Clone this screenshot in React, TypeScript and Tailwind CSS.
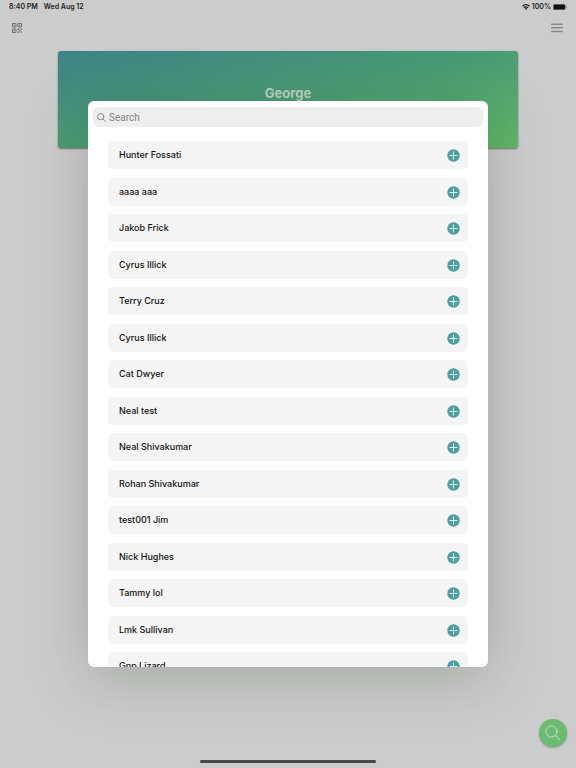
import { useState } from "react";

const people = [
  "Hunter Fossati",
  "aaaa aaa",
  "Jakob Frick",
  "Cyrus Illick",
  "Terry Cruz",
  "Cyrus Illick",
  "Cat Dwyer",
  "Neal test",
  "Neal Shivakumar",
  "Rohan Shivakumar",
  "test001 Jim",
  "Nick Hughes",
  "Tammy lol",
  "Lmk Sullivan",
  "Gnp Lizard",
];

function SearchIcon({ className }: { className: string }) {
  return (
    <svg viewBox="0 0 16 16" fill="none" stroke="currentColor" strokeLinecap="round" className={className} aria-hidden="true">
      <circle cx="6.5" cy="6.5" r="5.6" />
      <path d="M10.6 10.6 15 15" />
    </svg>
  );
}

function QrIcon() {
  return (
    <svg viewBox="0 0 10 10" className="size-[10px]" fill="none" stroke="currentColor" aria-hidden="true">
      <path strokeWidth="0.9" d="M.9.5h2.7q.4 0 .4.4v2.7q0 .4-.4.4H.9q-.4 0-.4-.4V.9Q.5.5.9.5ZM6.4.5h2.7q.4 0 .4.4v2.7q0 .4-.4.4H6.4q-.4 0-.4-.4V.9q0-.4.4-.4ZM.9 6h2.7q.4 0 .4.4v2.7q0 .4-.4.4H.9q-.4 0-.4-.4V6.4Q.5 6 .9 6Z" />
      <path fill="currentColor" stroke="none" d="M1.7 1.7h1.1v1.1H1.7zM7.2 1.7h1.1v1.1H7.2zM1.7 7.2h1.1v1.1H1.7zM5.6 5.6h1.3v1.3H5.6zM8.5 5.6h1.3v1.3H8.5zM7 7h1.3v1.3H7zM5.6 8.5h1.3v1.3H5.6zM8.5 8.5h1.3v1.3H8.5z" />
    </svg>
  );
}

function MenuIcon() {
  return (
    <svg viewBox="0 0 12 10" className="h-2.5 w-3" stroke="currentColor" strokeWidth="1.5" strokeLinecap="round" aria-hidden="true">
      <path d="M.7 1.2h10.6M.7 4.8h10.6M.7 8.4h10.6" />
    </svg>
  );
}

function StatusBar() {
  return (
    <div className="flex h-3.5 items-center justify-between pl-[9px] pr-[9px] text-[7px] font-semibold text-[#202020]">
      <div className="flex gap-1.5">
        <span>8:40 PM</span>
        <span>Wed Aug 12</span>
      </div>
      <div className="flex items-center gap-0.5">
        <svg viewBox="0 0 16 12" className="h-1.5 w-2" fill="none" stroke="currentColor" strokeWidth="2.6" aria-label="Wi-Fi">
          <path d="M1 4.4a10 10 0 0 1 14 0M3.8 7.8a6 6 0 0 1 8.4 0" />
          <path d="M8 12 5.6 9.4a3.4 3.4 0 0 1 4.8 0Z" fill="currentColor" stroke="none" />
        </svg>
        <span>100%</span>
        <svg viewBox="0 0 14 6" className="h-1.5 w-3.5" aria-label="Battery">
          <rect x="0.3" y="0.3" width="12" height="5.4" rx="1.5" fill="#111" stroke="#777" strokeWidth="0.5" />
          <path d="M13 2v2q.8-.3.8-1T13 2Z" fill="#777" />
        </svg>
      </div>
    </div>
  );
}

function PersonRow({ name }: { name: string }) {
  return (
    <li className="flex h-7 shrink-0 items-center justify-between rounded-[5px] bg-[#f5f5f5] pl-[11px] pr-2 odd:mb-[9px] even:mb-2">
      <span className="text-[9px] font-medium text-[#111]">{name}</span>
      <button type="button" aria-label={`Add ${name}`} className="rounded-full text-[#4c9f9e]">
        <svg viewBox="0 0 13 13" className="size-[13px]">
          <circle cx="6.5" cy="6.5" r="6.2" fill="currentColor" />
          <path d="M6.5 2.9v7.2M2.9 6.5h7.2" stroke="#dcf0ef" strokeLinecap="round" />
        </svg>
      </button>
    </li>
  );
}

function App() {
  const [query, setQuery] = useState("");
  const shown = people.filter((name) => name.toLowerCase().includes(query.toLowerCase()));

  return (
    <div className="relative flex h-screen flex-col overflow-hidden bg-[#cccccc] font-['Inter','Noto_Sans',sans-serif]">
      <StatusBar />

      <header className="flex h-7 items-center justify-between pl-3 pr-[13px]">
        <button type="button" aria-label="Scan code" className="text-[#5c5c5c]">
          <QrIcon />
        </button>
        <button type="button" aria-label="Menu" className="text-[#8a8a8a]">
          <MenuIcon />
        </button>
      </header>

      <main className="flex-1 px-[58px] pt-[9px]">
        <section className="flex h-[97px] flex-col items-center rounded-[3px] bg-linear-to-br from-[#3e8387] via-[#4a9c74] to-[#62b766] pt-8 shadow-[0_1px_2px_rgba(0,0,0,0.45)]">
          <h1 className="text-[13px] leading-5 font-bold text-[#bdd3c7]">George</h1>
        </section>
      </main>

      <div className="mx-auto mb-[5px] h-[3px] w-44 rounded-full bg-[#484848]" />

      <button
        type="button"
        aria-label="Find people"
        className="absolute right-[9px] bottom-[21px] flex size-7 items-center justify-center rounded-full bg-[#6cbb72] text-[#c9dfcb] shadow-[0_1px_2px_rgba(0,0,0,0.25)]"
      >
        <SearchIcon className="size-4" />
      </button>

      <div className="pointer-events-none absolute inset-0 px-[88px] py-[101px]">
        <div
          role="dialog"
          aria-label="Add people"
          className="pointer-events-auto flex h-full flex-col overflow-hidden rounded-md bg-white px-[5px] pt-1.5 shadow-[0_10px_60px_rgba(40,60,40,0.25)]"
        >
          <label className="flex h-5 shrink-0 items-center gap-[3px] rounded-md bg-[#eeeeee] px-1 text-[#7f7f84]">
            <SearchIcon className="size-[9px] [stroke-width:1.6]" />
            <input
              type="text"
              aria-label="Search"
              placeholder="Search"
              value={query}
              onChange={(e) => setQuery(e.target.value)}
              className="min-w-0 flex-1 bg-transparent font-['Roboto','Noto_Sans',sans-serif] text-[10px] text-[#222] outline-none placeholder:text-[#838388]"
            />
          </label>
          <ul className="mt-3.5 flex min-h-0 flex-1 flex-col overflow-y-auto px-[15px] [scrollbar-width:none]">
            {shown.map((name, i) => (
              <PersonRow key={i} name={name} />
            ))}
          </ul>
        </div>
      </div>
    </div>
  );
}

export default App;
